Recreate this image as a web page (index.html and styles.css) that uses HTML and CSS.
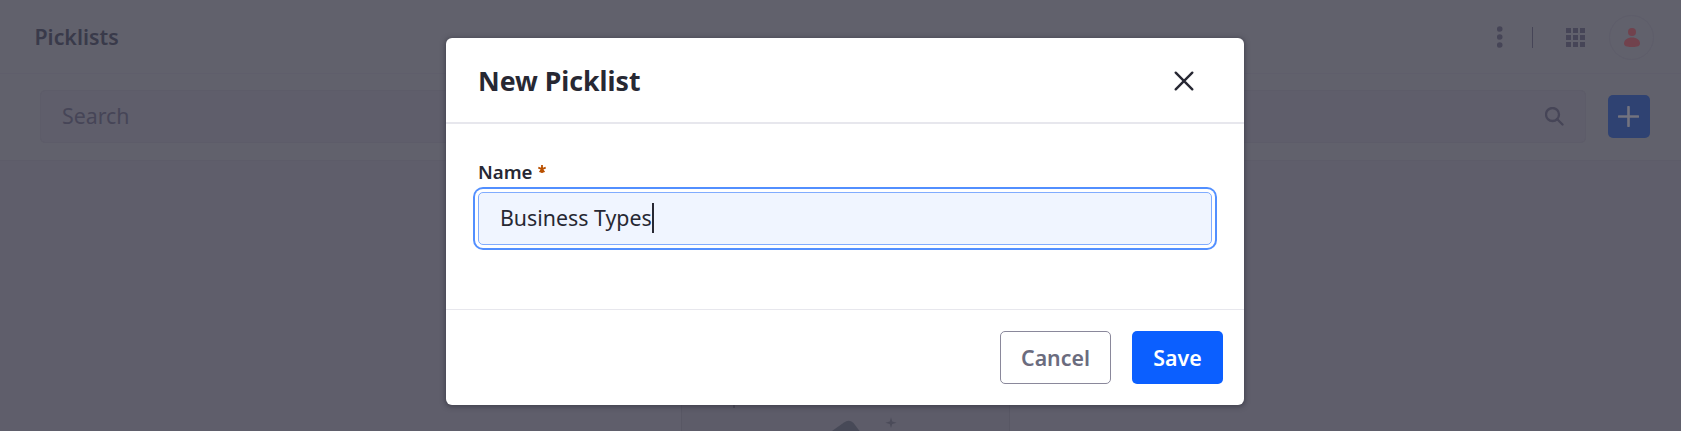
FILE: index.html
```html
<!DOCTYPE html>
<html lang="en">
<head>
<meta charset="utf-8">
<title>Picklists</title>
<link rel="stylesheet" href="styles.css">
</head>
<body>
<header class="topbar">
  <h1 class="page-title">Picklists</h1>
  <svg class="dots" viewBox="0 0 6 22"><circle cx="2.700" cy="3" r="2.800"/><circle cx="2.700" cy="11" r="2.800"/><circle cx="2.700" cy="19" r="2.800"/></svg>
  <span class="divider"></span>
  <svg class="grid" viewBox="0 0 19 19"><path d="M0 0h5v5H0zM7 0h5v5H7zM14 0h5v5h-5zM0 7h5v5H0zM7 7h5v5H7zM14 7h5v5h-5zM0 14h5v5H0zM7 14h5v5H7zM14 14h5v5h-5z"/></svg>
  <span class="avatar"><svg viewBox="0 0 16 19"><circle cx="8" cy="4" r="4"/><path d="M0 15.500C0 12 3.500 9.500 8 9.500s8 2.500 8 6c0 2.500-2.500 3.500-8 3.500s-8-1-8-3.500z"/></svg></span>
</header>
<div class="toolbar">
  <div class="search"><span>Search</span>
    <svg viewBox="0 0 19 19"><circle cx="7.500" cy="7.500" r="6.500"/><path d="M12.300 12.300l5.200 5.200"/></svg>
  </div>
  <button class="add" aria-label="Add"><svg viewBox="0 0 21 21"><path d="M10.500 1v19M1 10.500h19"/></svg></button>
</div>
<main class="content">
  <svg class="empty-art" viewBox="0 0 330 26"><path class="sheet" d="M0 0h328v26H0z"/><path class="edge" d="M.5 0v26M328.500 0v26"/><path class="mark" d="M151 26l12-8.500q5-3.500 9.500.5l6 8z"/><path class="spark" d="M210 12.500l1.200 4 4.300 1.300-4.300 1.200-1.200 4-1.200-4-4.300-1.200 4.300-1.300zM52 0h2v3h-2z"/></svg>
</main>
<section class="modal" role="dialog">
  <div class="modal-header"><h2>New Picklist</h2>
    <svg class="close" viewBox="0 0 20 20"><path d="M1.700 1.700l16.600 16.600M18.300 1.700L1.700 18.300"/></svg>
  </div>
  <div class="modal-body">
    <div class="label">Name <svg class="required" viewBox="0 0 8 8"><path d="M4 0v8M.3 2.700L4 4l3.700-1.300M1.700 7.200L4 4l2.300 3.200"/></svg></div>
    <div class="field"><span>Business Types</span><i class="caret"></i></div>
  </div>
  <div class="modal-footer">
    <button class="btn cancel">Cancel</button>
    <button class="btn save">Save</button>
  </div>
</section>
</body>
</html>
```
FILE: styles.css
```css
* { box-sizing: border-box; }
body { margin: 0; height: 431px; overflow: hidden; display: flex; flex-direction: column; background: #5f5e6b; font-family: "Noto Sans", sans-serif; color: #272833; }
h1, h2 { margin: 0; }
svg { display: block; flex: none; }
button { border: 0; font-family: inherit; }
.topbar { height: 74px; flex: none; display: flex; align-items: center; padding: 1px 27px 0 34.500px; background: #61616c; border-bottom: 1px solid #5f5e6b; }
.page-title { margin-right: auto; font-size: 21.330px; font-weight: 600; color: #393a4a; line-height: 30px; }
.dots { width: 6px; height: 22px; fill: #464557; margin-right: 29px; }
.divider { width: 1px; height: 21px; background: #464557; margin-right: 33px; }
.grid { width: 19px; height: 19px; fill: #464557; margin-right: 24px; }
.avatar { width: 45px; height: 45px; border: 1px solid #5e5d6a; border-radius: 50%; display: grid; place-items: center; }
.avatar svg { width: 16px; height: 19px; fill: #71424d; }
.toolbar { height: 87px; flex: none; display: flex; align-items: center; gap: 22px; padding: 0 31px 1px 40px; background: #61616c; border-bottom: 1px solid #5d5c69; }
.search { flex: 1; height: 53px; display: flex; align-items: center; justify-content: space-between; padding: 0 21px; border: 1px solid #5d5c69; border-radius: 5px; background: #5f5e6b; color: #464557; font-size: 21.330px; }
.search span { padding-bottom: 2px; }
.search svg { width: 19px; height: 19px; fill: none; stroke: #464557; stroke-width: 2.300; stroke-linecap: round; }
.add { width: 42px; height: 43px; padding: 0 1px 0 0; display: grid; place-items: center; border-radius: 5px; background: #2f4272; }
.add svg { width: 21px; height: 21px; stroke: #73737f; stroke-width: 2.600; stroke-linecap: round; }
.content { flex: 1; display: flex; align-items: flex-end; padding-left: 681px; }
.empty-art { width: 330px; height: 26px; }
.sheet { fill: #5d5c69; }
.edge { stroke: #585764; }
.mark { fill: #474957; }
.spark { fill: #4b4b59; }
.modal { position: absolute; left: 446px; top: 38px; width: 798px; height: 367px; display: flex; flex-direction: column; background: #fff; border-radius: 6px; box-shadow: 0 1px 5px 1px rgba(39, 40, 51, .5); }
.modal-header { height: 86px; flex: none; display: flex; align-items: center; justify-content: space-between; padding: 1px 50.500px 0 32px; border-bottom: 2px solid #e7e7ed; }
.modal-header h2 { font-size: 26.660px; font-weight: 700; line-height: 36px; }
.close { width: 20px; height: 20px; stroke: #272833; stroke-width: 2.400; stroke-linecap: round; }
.modal-body { flex: 1; padding: 35px 32px 0; }
.label { height: 33px; line-height: 26px; font-size: 18.660px; font-weight: 600; }
.required { display: inline-block; width: 8px; height: 8px; margin-left: 1px; vertical-align: 6px; overflow: visible; fill: none; stroke: #b95000; stroke-width: 1.800; }
.field { height: 53px; display: flex; align-items: center; padding: 0 21px; border: 1px solid #80acff; border-radius: 5px; background: #f0f5ff; box-shadow: 0 0 0 3px #fff, 0 0 0 5px #528fff; font-size: 21.330px; }
.field span { padding-bottom: 2px; }
.caret { width: 2px; height: 30px; margin-bottom: 2px; background: #272833; }
.modal-footer { height: 96px; flex: none; display: flex; align-items: center; justify-content: flex-end; gap: 21px; padding: 0 21px; border-top: 1px solid #e7e7ed; }
.btn { height: 53px; padding: 0; border-radius: 5px; font-size: 21.330px; font-weight: 600; }
.cancel { width: 111px; border: 1px solid #8a889b; background: #fff; color: #6b6c7e; }
.save { width: 91px; background: #0b5fff; color: #fff; }
```
